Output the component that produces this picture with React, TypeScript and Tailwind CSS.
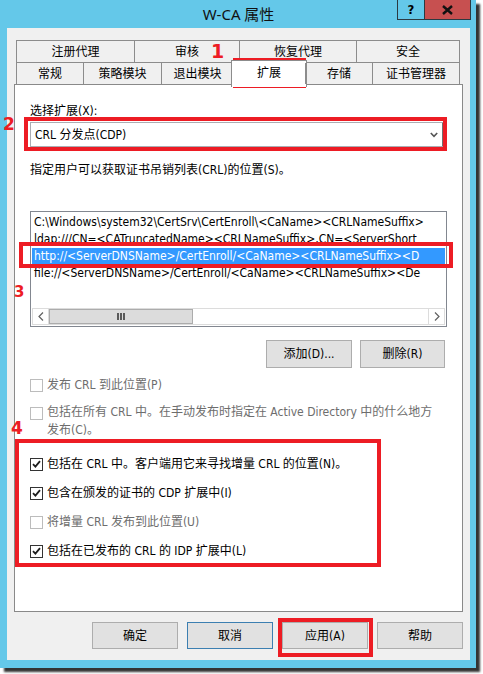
import React from 'react'

const topTabs = [
  { label: '注册代理', w: 'w-[118px]' },
  { label: '审核', w: 'w-[105px]' },
  { label: '恢复代理', w: 'w-[117px]' },
  { label: '安全', w: 'w-[104px]' },
]

const bottomTabs = [
  { label: '常规', w: 'w-[67px]' },
  { label: '策略模块', w: 'w-[78px]' },
  { label: '退出模块', w: 'w-[72px]' },
  { label: '扩展', w: 'w-[72px]', active: true },
  { label: '存储', w: 'w-[67px]' },
  { label: '证书管理器', w: 'w-[88px]' },
]

// the list is narrower than the paths, the box clips them
const locations = [
  'C:\\Windows\\system32\\CertSrv\\CertEnroll\\<CaName><CRLNameSuffix>',
  'ldap:///CN=<CATruncatedName><CRLNameSuffix>,CN=<ServerShort',
  'http://<ServerDNSName>/CertEnroll/<CaName><CRLNameSuffix><D',
  'file://<ServerDNSName>/CertEnroll/<CaName><CRLNameSuffix><De',
]

function CheckBox({ checked, disabled }: { checked?: boolean; disabled?: boolean }) {
  return (
    <span
      className={`flex h-[13px] w-[13px] shrink-0 items-center justify-center border bg-white ${
        disabled ? 'border-[#bcbcbc]' : 'border-[#333333]'
      }`}
    >
      {checked && (
        <svg width="9" height="8" viewBox="0 0 9 8">
          <path d="M1 4.2 L3.4 6.6 L8 1.2" fill="none" stroke="#1e1e1e" strokeWidth="1.8" />
        </svg>
      )}
    </span>
  )
}

function Option({ label, checked, disabled }: { label: string; checked?: boolean; disabled?: boolean }) {
  return (
    <div className={`flex h-[14px] items-center gap-[4px] ${disabled ? 'text-[#6d6d6d]' : 'text-black'}`}>
      <CheckBox checked={checked} disabled={disabled} />
      <span className="whitespace-nowrap">{label}</span>
    </div>
  )
}

function Button({ children, focused }: { children: React.ReactNode; focused?: boolean }) {
  return (
    <div
      className={`flex h-[27px] w-[86px] items-center justify-center border bg-[#e1e1e1] ${
        focused ? 'border-[#3c7fb1]' : 'border-[#adadad]'
      }`}
    >
      {children}
    </div>
  )
}

function Chevron({ dir }: { dir: 'left' | 'right' }) {
  return (
    <svg width="6" height="9" viewBox="0 0 6 9">
      <path
        d={dir === 'left' ? 'M5 0.5 L1 4.5 L5 8.5' : 'M1 0.5 L5 4.5 L1 8.5'}
        fill="none"
        stroke="#606060"
        strokeWidth="1.2"
      />
    </svg>
  )
}

export default function App() {
  return (
    <div className="relative h-[674px] w-[483px] overflow-hidden bg-white text-[12px] text-black font-['DejaVu_Sans_Condensed','Noto_Sans_CJK_SC',sans-serif]">
      {/* window frame */}
      <div className="relative flex h-[668px] w-[476px] flex-col bg-[#64c8e9] pb-[8px] pl-[7px] pr-[6px] shadow-[4px_4px_2px_rgba(0,0,0,0.8)]">
        <div className="flex h-[28px] items-center justify-center text-[15px] text-[#111] font-['Noto_Sans','Noto_Sans_CJK_SC',sans-serif]">
          W-CA 属性
        </div>

        {/* caption buttons */}
        <div className="absolute right-[5px] top-0 flex h-[20px]">
          <div className="flex w-[27px] items-center justify-center border-b border-l border-[#2b3a42] text-[13px] font-bold">?</div>
          <div className="flex w-[47px] items-center justify-center border-b border-l border-r border-[#2b3a42] bg-[#c75050]">
            <svg width="11" height="10" viewBox="0 0 11 10">
              <path d="M1 1 L10 9 M10 1 L1 9" stroke="#111" strokeWidth="2.4" />
            </svg>
          </div>
        </div>

        {/* client area */}
        <div className="flex flex-1 flex-col bg-[#f0f0f0] pl-[7px] pt-[12px]">
          {/* tab rows */}
          <div className="ml-[2px] flex h-[22px] w-[444px]">
            {topTabs.map((t, i) => (
              <div
                key={t.label}
                className={`flex h-[22px] items-center justify-center border-l border-t border-[#8c8c8c] ${t.w} ${
                  i === topTabs.length - 1 ? 'border-r' : ''
                }`}
              >
                {t.label}
              </div>
            ))}
          </div>
          <div className="relative z-10 ml-[2px] flex h-[22px] w-[444px] border-t border-[#8c8c8c]">
            {bottomTabs.map((t, i) =>
              t.active ? (
                <div key={t.label} className={`flex justify-center ${t.w}`}>
                  <div className="-mx-[2px] -mt-[3px] flex h-[27px] flex-1 items-center justify-center border-l border-r border-t border-[#8c8c8c] bg-white pb-[2px]">
                    {t.label}
                  </div>
                </div>
              ) : (
                <div
                  key={t.label}
                  className={`flex h-[21px] items-center justify-center border-l border-[#8c8c8c] ${t.w} ${
                    i === bottomTabs.length - 1 ? 'border-r' : ''
                  }`}
                >
                  {t.label}
                </div>
              ),
            )}
          </div>

          {/* tab page */}
          <div className="h-[528px] w-[449px] border border-[#898989] bg-white pl-[15px] pt-[19px]">
            <div className="h-[14px] leading-[14px]">选择扩展(X):</div>
            <div className="mt-[4px] flex h-[25px] w-[415px] items-center border border-[#abadb3] border-r-[3px] border-r-[#707070] bg-white pl-[4px] pr-[4px]">
              <span className="flex-1">CRL 分发点(CDP)</span>
              <svg width="8" height="6" viewBox="0 0 8 6">
                <path d="M0.8 1 L4 4.4 L7.2 1" fill="none" stroke="#555" strokeWidth="1.6" />
              </svg>
            </div>
            <div className="mt-[16px] h-[14px] leading-[14px]">指定用户可以获取证书吊销列表(CRL)的位置(S)。</div>

            {/* location list */}
            <div className="mt-[34px] flex h-[116px] w-[417px] flex-col border border-[#828790] bg-white p-[1px]">
              <div className="flex-1 overflow-hidden pt-[1px]">
                {locations.map((l, i) => (
                  <div
                    key={l}
                    className={`h-[17px] overflow-hidden whitespace-nowrap pl-[2px] leading-[17px] ${
                      i === 2 ? 'bg-[#3399ff] text-white' : ''
                    }`}
                  >
                    {l}
                  </div>
                ))}
              </div>
              <div className="flex h-[17px] border border-[#dcdcdc] bg-white">
                <div className="flex w-[16px] items-center justify-center border-r border-[#dcdcdc]">
                  <Chevron dir="left" />
                </div>
                <div className="flex w-[144px] items-center justify-center border border-[#acacac] bg-[#dcdcdc]">
                  <svg width="8" height="7" viewBox="0 0 8 7">
                    <path d="M0 0h2v7H0zM3 0h2v7H3zM6 0h2v7H6z" fill="#5a5a5a" />
                  </svg>
                </div>
                <div className="flex-1" />
                <div className="flex w-[16px] items-center justify-center border-l border-[#dcdcdc]">
                  <Chevron dir="right" />
                </div>
              </div>
            </div>

            <div className="ml-[236px] mt-[13px] flex gap-[8px]">
              <div className="flex h-[28px] w-[86px] items-center justify-center border border-[#adadad] bg-[#e1e1e1]">添加(D)...</div>
              <div className="flex h-[28px] w-[85px] items-center justify-center border border-[#adadad] bg-[#e1e1e1]">删除(R)</div>
            </div>

            {/* options */}
            <div className="mt-[10px]">
              <Option label="发布 CRL 到此位置(P)" disabled />
            </div>
            <div className="mt-[11px] flex gap-[4px] leading-[18px] text-[#6d6d6d]">
              <span className="mt-[4px]">
                <CheckBox disabled />
              </span>
              <span className="whitespace-nowrap">
                包括在所有 CRL 中。在手动发布时指定在 Active Directory 中的什么地方
                <br />
                发布(C)。
              </span>
            </div>
            <div className="mt-[18px] flex flex-col gap-[15px]">
              <Option label="包括在 CRL 中。客户端用它来寻找增量 CRL 的位置(N)。" checked />
              <Option label="包含在颁发的证书的 CDP 扩展中(I)" checked />
              <Option label="将增量 CRL 发布到此位置(U)" disabled />
              <Option label="包括在已发布的 CRL 的 IDP 扩展中(L)" checked />
            </div>
          </div>

          {/* dialog buttons */}
          <div className="mt-[10px] flex w-[449px] justify-end gap-[9px]">
            <Button>确定</Button>
            <Button focused>取消</Button>
            <Button>应用(A)</Button>
            <Button>帮助</Button>
          </div>
        </div>
      </div>

      {/* red annotations */}
      <div className="pointer-events-none absolute left-[233px] top-[58px] h-[30px] w-[73px] border-[4px] border-[#ed1c24]" />
      <div className="pointer-events-none absolute left-[24px] top-[117px] h-[34px] w-[423px] border-[4px] border-[#ed1c24]" />
      <div className="pointer-events-none absolute left-[19px] top-[242px] h-[26px] w-[434px] border-[4px] border-[#ed1c24]" />
      <div className="pointer-events-none absolute left-[15px] top-[439px] h-[128px] w-[366px] border-[4px] border-[#ed1c24]" />
      <div className="pointer-events-none absolute left-[278px] top-[618px] h-[39px] w-[95px] border-[4px] border-[#ed1c24]" />
      <span className="absolute left-[211px] top-[40px] text-[19px] font-bold leading-[22px] text-[#ed1c24] font-['DejaVu_Sans',sans-serif]">1</span>
      <span className="absolute left-[3px] top-[114px] text-[17px] font-bold leading-[20px] text-[#ed1c24] font-['DejaVu_Sans',sans-serif]">2</span>
      <span className="absolute left-[14px] top-[283px] text-[15px] font-bold leading-[18px] text-[#ed1c24] font-['DejaVu_Sans',sans-serif]">3</span>
      <span className="absolute left-[11px] top-[418px] text-[17px] font-bold leading-[20px] text-[#ed1c24] font-['DejaVu_Sans',sans-serif]">4</span>
    </div>
  )
}
